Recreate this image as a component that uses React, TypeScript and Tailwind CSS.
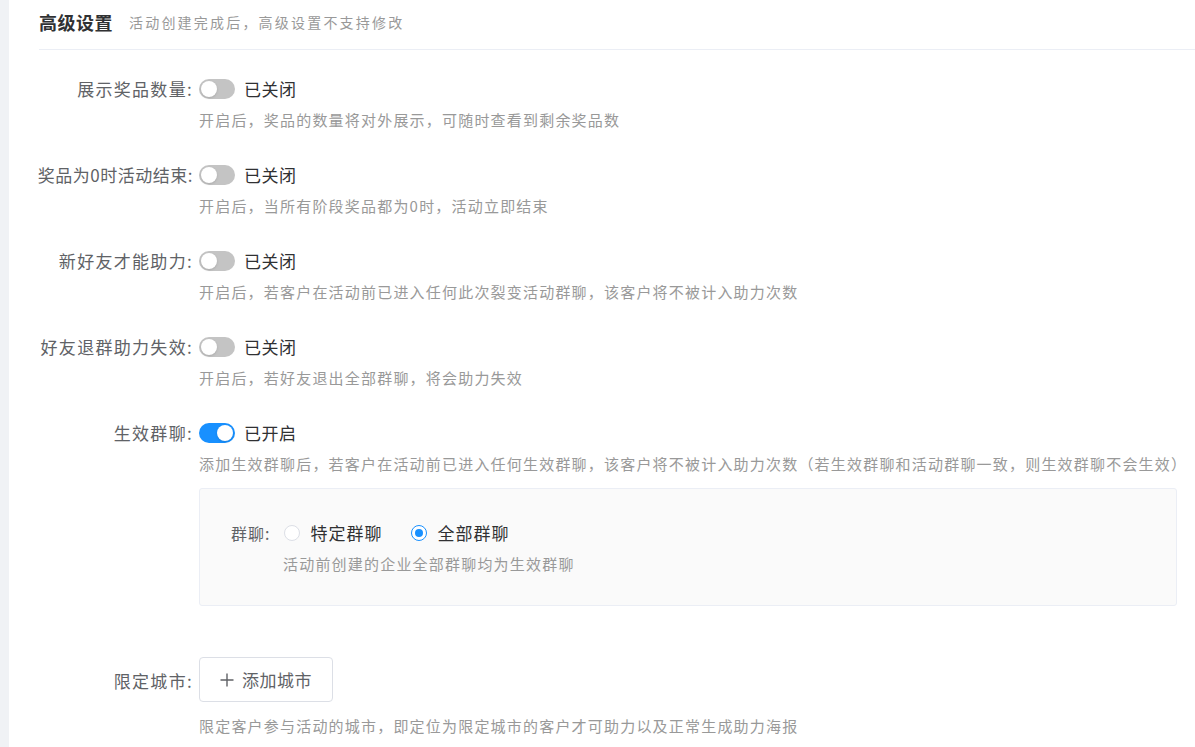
import React from "react";

const font = { fontFamily: '"Noto Sans CJK SC", "Noto Sans", sans-serif' };

function Switch({ on }: { on: boolean }) {
  return (
    <span
      className={`relative inline-flex h-[20px] w-[36px] shrink-0 items-center rounded-full ${
        on ? "bg-[#1890ff]" : "bg-[#c4c4c4]"
      }`}
    >
      <span
        className={`absolute top-[2px] h-[16px] w-[16px] rounded-full bg-white shadow-sm ${
          on ? "left-[18px]" : "left-[2px]"
        }`}
      />
    </span>
  );
}

function Radio({ checked, label }: { checked: boolean; label: string }) {
  return (
    <label className="flex items-center gap-[10px]">
      <span
        className={`flex h-[16px] w-[16px] items-center justify-center rounded-full border bg-white ${
          checked ? "border-[#1890ff]" : "border-[#dcdfe6]"
        }`}
      >
        {checked && <span className="h-[8px] w-[8px] rounded-full bg-[#1890ff]" />}
      </span>
      <span className="text-[17px] tracking-[1px] text-[#303133]">{label}</span>
    </label>
  );
}

function Desc({ children }: { children: React.ReactNode }) {
  return (
    <div className="text-[15px] leading-[30px] tracking-[1.2px] text-[#999999] whitespace-nowrap">
      {children}
    </div>
  );
}

function Item({
  label,
  children,
  className = "",
  labelClass = "leading-[32px] tracking-[1.3px]",
}: {
  label: string;
  children: React.ReactNode;
  className?: string;
  labelClass?: string;
}) {
  return (
    <div className={`flex ${className}`}>
      <div
        className={`w-[190px] shrink-0 pr-[6px] text-right text-[17px] text-[#606266] whitespace-nowrap ${labelClass}`}
      >
        {label}
      </div>
      <div className="min-w-0 flex-1">{children}</div>
    </div>
  );
}

const toggles = [
  { label: "展示奖品数量:", tight: false, desc: "开启后，奖品的数量将对外展示，可随时查看到剩余奖品数" },
  { label: "奖品为0时活动结束:", tight: true, desc: "开启后，当所有阶段奖品都为0时，活动立即结束" },
  { label: "新好友才能助力:", tight: false, desc: "开启后，若客户在活动前已进入任何此次裂变活动群聊，该客户将不被计入助力次数" },
  { label: "好友退群助力失效:", tight: false, desc: "开启后，若好友退出全部群聊，将会助力失效" },
];

export default function App() {
  return (
    <div className="flex min-h-screen bg-white" style={font}>
      <div className="w-[9px] shrink-0 bg-[#f0f2f5]" />
      <div className="min-w-0 flex-1">
        {/* header */}
        <div className="ml-[30px] h-[50px] border-b border-[#ebeef5] pt-[8px]">
          <div className="flex h-[28px] items-center">
            <span className="text-[18px] font-bold tracking-[0.5px] text-[#303133]">高级设置</span>
            <span className="ml-[16px] text-[14px] tracking-[2.2px] text-[#999999]">
              活动创建完成后，高级设置不支持修改
            </span>
          </div>
        </div>

        <div className="pt-[23px] pr-[18px]">
          {toggles.map((t) => (
            <Item
              key={t.label}
              label={t.label}
              className="mb-[24px]"
              labelClass={t.tight ? "leading-[32px] tracking-[0.5px]" : "leading-[32px] tracking-[1.3px]"}
            >
              <div className="flex h-[32px] items-center gap-[9px]">
                <Switch on={false} />
                <span className="text-[17px] tracking-[0.5px] text-[#303133]">已关闭</span>
              </div>
              <Desc>{t.desc}</Desc>
            </Item>
          ))}

          <Item label="生效群聊:">
            <div className="flex h-[32px] items-center gap-[9px]">
              <Switch on />
              <span className="text-[17px] tracking-[0.5px] text-[#303133]">已开启</span>
            </div>
            <Desc>
              添加生效群聊后，若客户在活动前已进入任何生效群聊，该客户将不被计入助力次数（若生效群聊和活动群聊一致，则生效群聊不会生效）
            </Desc>
            <div className="mt-[9px] rounded-[3px] border border-[#ebeef5] bg-[#fafafa] pt-[28px] pb-[26px] pl-[31px]">
              <div className="flex h-[32px] items-center">
                <span className="mr-[14px] text-[16px] tracking-[1px] text-[#606266]">群聊:</span>
                <div className="flex items-center gap-[29px]">
                  <Radio checked={false} label="特定群聊" />
                  <Radio checked label="全部群聊" />
                </div>
              </div>
              <div className="pl-[52px]">
                <Desc>活动前创建的企业全部群聊均为生效群聊</Desc>
              </div>
            </div>
          </Item>

          <Item label="限定城市:" className="mt-[51px]" labelClass="leading-[47px] tracking-[1.3px]">
            <button className="flex h-[45px] w-[134px] items-center justify-center gap-[8px] rounded-[4px] border border-[#dcdfe6] bg-white text-[17px] tracking-[0.5px] text-[#606266]">
              <svg width="14" height="14" viewBox="0 0 14 14" fill="none">
                <path d="M7 0.5V13.5M0.5 7H13.5" stroke="#606266" strokeWidth="1.4" />
              </svg>
              <span>添加城市</span>
            </button>
            <div className="mt-[9px]">
              <Desc>限定客户参与活动的城市，即定位为限定城市的客户才可助力以及正常生成助力海报</Desc>
            </div>
          </Item>
        </div>
      </div>
    </div>
  );
}
